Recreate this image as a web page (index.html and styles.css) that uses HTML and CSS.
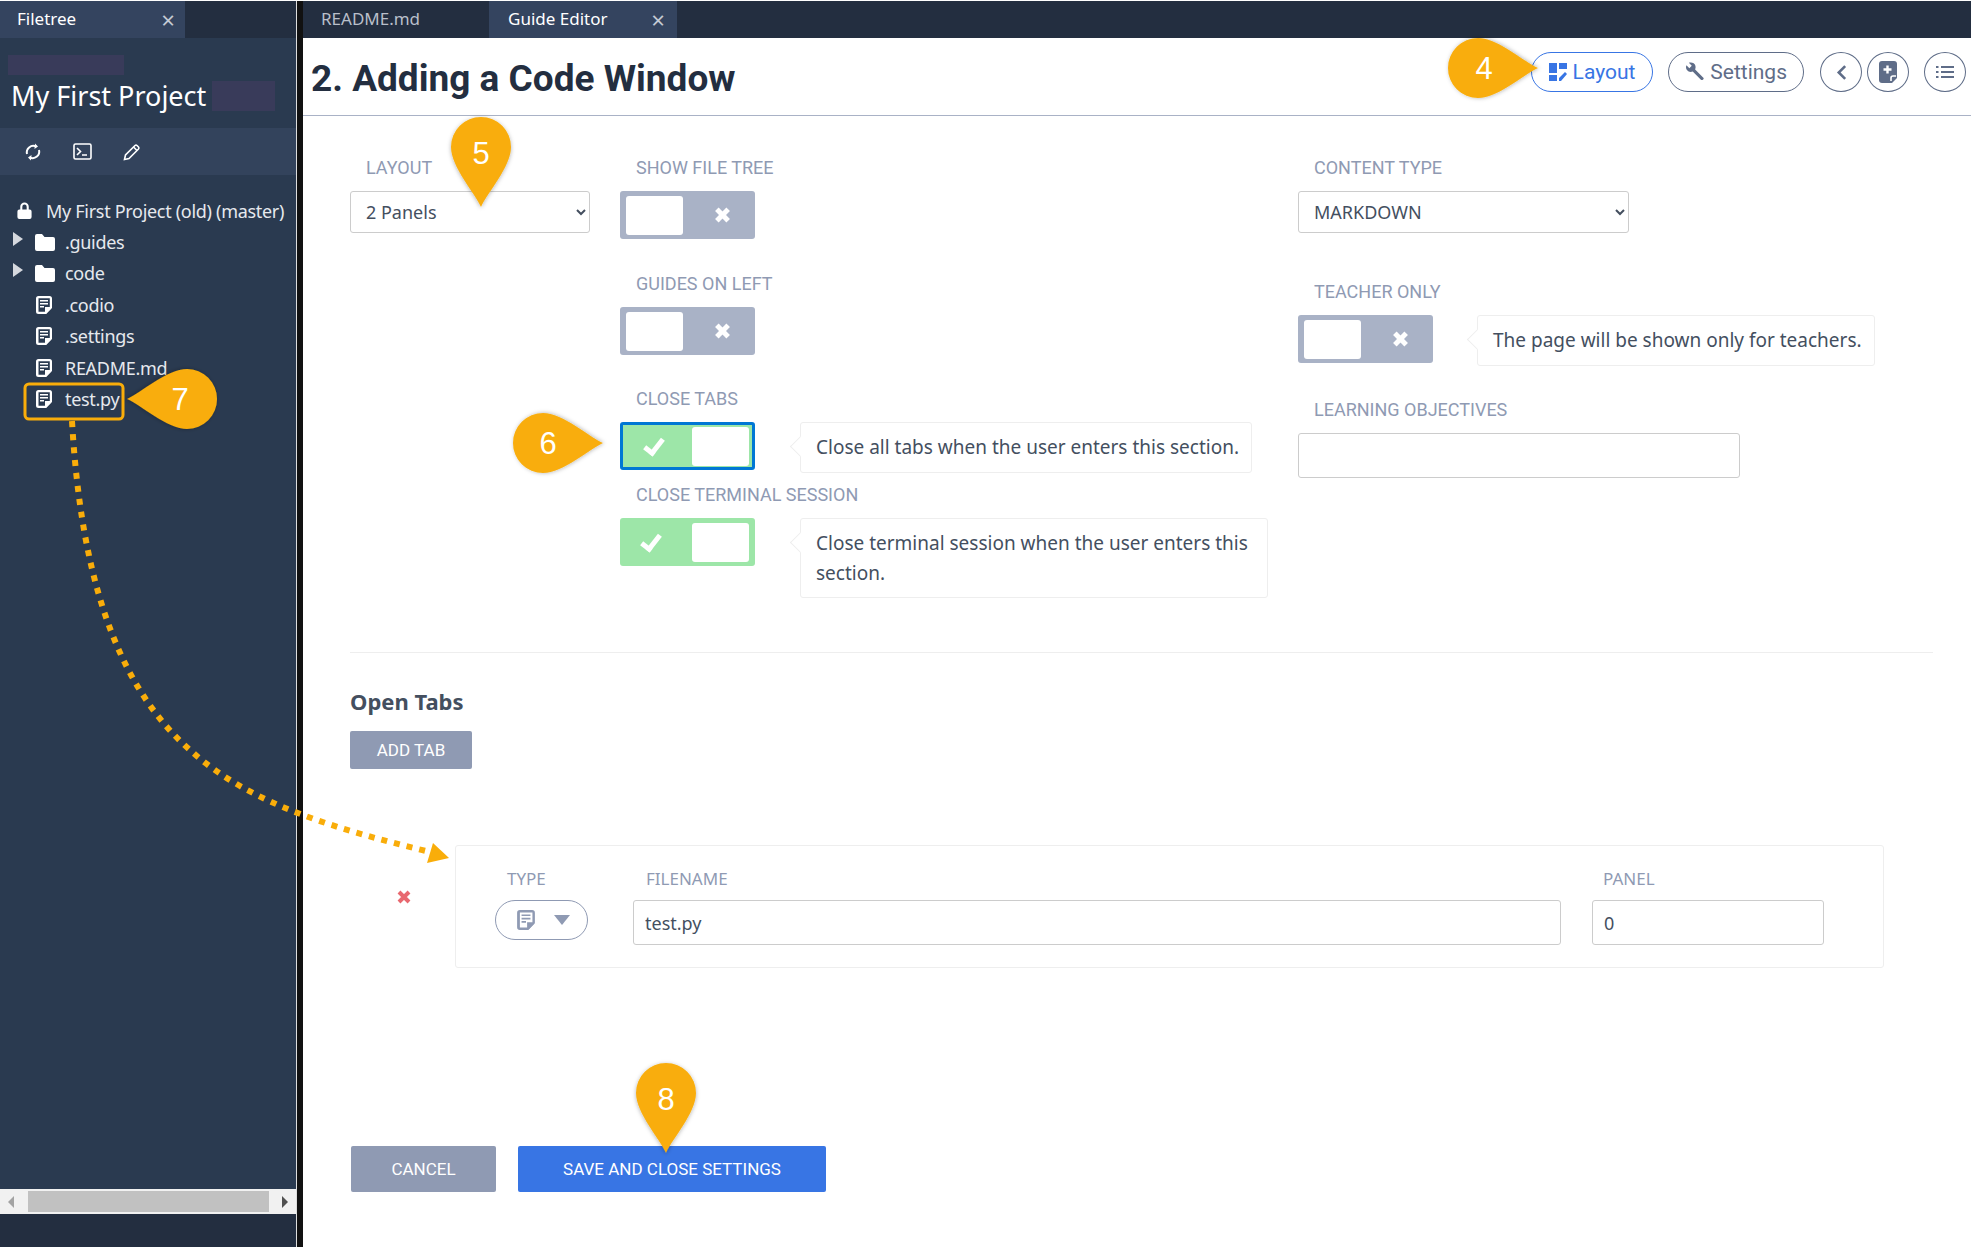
FILE: index.html
```html
<!DOCTYPE html>
<html lang="en">

<head>
    <meta charset="UTF-8">
    <title>Guide Editor</title>
    <link rel="stylesheet" href="styles.css">
</head>

<body>
    <svg class="icon-defs" width="0" height="0">
        <symbol id="i-file" viewBox="0 0 16 18">
            <path fill-rule="evenodd" d="M2.5 0h11A2.5 2.5 0 0 1 16 2.500V12l-6 6H2.500A2.500 2.500 0 0 1 0 15.500v-13A2.500 2.500 0 0 1 2.500 0zM2.500 2.200v13.600H9V11h4.800V2.200z" />
            <path d="M4 4h8v1.500H4zM4 7h8v1.500H4zM4 10h4v1.500H4zM10 12.500h5L10 18z" />
        </symbol>
        <symbol id="i-folder" viewBox="0 0 20 17">
            <path d="M2 0h5l2.500 3H18a2 2 0 0 1 2 2v10a2 2 0 0 1-2 2H2a2 2 0 0 1-2-2V2a2 2 0 0 1 2-2z" />
        </symbol>
    </svg>

    <div class="app">
        <aside class="sidebar">
            <div class="tabbar">
                <div class="tab tab-active tab-filetree">
                    <span>Filetree</span>
                    <span class="tab-close">&times;</span>
                </div>
            </div>
            <div class="project">
                <div class="redact redact-top"></div>
                <div class="project-name">
                    <span>My First Project</span>
                    <div class="redact redact-name"></div>
                </div>
            </div>
            <div class="toolbar">
                <svg class="tool" viewBox="0 0 18 18" width="18" height="18" fill="none" stroke="currentColor" stroke-width="2">
                    <path d="M3 11a6.500 6.500 0 0 1 9-7.500M15 7a6.500 6.500 0 0 1-9 7.500" />
                    <path d="M11 0.500l3 3-3.500 2.500zM7 17.500l-3-3 3.500-2.500z" fill="currentColor" stroke="none" />
                </svg>
                <svg class="tool" viewBox="0 0 19 17" width="19" height="17" fill="none" stroke="currentColor" stroke-width="1.600">
                    <rect x="1" y="1" width="17" height="15" rx="1.500" />
                    <path d="M4 5l3.500 3.500L4 12M9 12h5" />
                </svg>
                <svg class="tool" viewBox="0 0 18 18" width="18" height="18" fill="none" stroke="currentColor" stroke-width="1.600">
                    <path d="M1.500 16.500l1-4.500L12 2.500a1.500 1.500 0 0 1 2 0l1.500 1.500a1.500 1.500 0 0 1 0 2L6 15.500z" />
                    <path d="M10.500 4l3.500 3.500" />
                </svg>
            </div>
            <ul class="tree">
                <li class="tree-row tree-root">
                    <svg viewBox="0 0 15 18" width="15" height="17" fill="currentColor">
                        <path d="M2 8h1V5a4.500 4.500 0 0 1 9 0v3h1a2 2 0 0 1 2 2v6a2 2 0 0 1-2 2H2a2 2 0 0 1-2-2v-6a2 2 0 0 1 2-2zM5.200 8h4.600V5a2.300 2.300 0 0 0-4.600 0z" />
                    </svg>
                    <span>My First Project (old) (master)</span>
                </li>
                <li class="tree-row">
                    <span class="caret"></span>
                    <svg class="tree-folder" width="20" height="17"><use href="#i-folder" /></svg>
                    <span>.guides</span>
                </li>
                <li class="tree-row">
                    <span class="caret"></span>
                    <svg class="tree-folder" width="20" height="17"><use href="#i-folder" /></svg>
                    <span>code</span>
                </li>
                <li class="tree-row tree-file">
                    <svg width="16" height="18"><use href="#i-file" /></svg>
                    <span>.codio</span>
                </li>
                <li class="tree-row tree-file">
                    <svg width="16" height="18"><use href="#i-file" /></svg>
                    <span>.settings</span>
                </li>
                <li class="tree-row tree-file">
                    <svg width="16" height="18"><use href="#i-file" /></svg>
                    <span>README.md</span>
                </li>
                <li class="tree-row tree-file">
                    <svg width="16" height="18"><use href="#i-file" /></svg>
                    <span>test.py</span>
                </li>
            </ul>
            <div class="hscroll">
                <span class="hscroll-left"></span>
                <div class="hscroll-thumb"></div>
                <span class="hscroll-right"></span>
            </div>
            <div class="sidebar-foot"></div>
        </aside>

        <div class="splitter"></div>

        <main class="main">
            <div class="tabbar">
                <div class="tab tab-readme">README.md</div>
                <div class="tab tab-active tab-guide">
                    <span>Guide Editor</span>
                    <span class="tab-close">&times;</span>
                </div>
            </div>

            <header class="page-head">
                <h1>2. Adding a Code Window</h1>
                <div class="head-actions">
                    <button class="pill pill-blue">
                        <svg viewBox="0 0 18 18" width="18" height="18" fill="currentColor">
                            <path d="M0 0h8v10H0zM10 0h8v6h-8zM0 12h8v6H0zM10 18v-3l6-6 2 2-6 7z" />
                        </svg>
                        Layout
                    </button>
                    <button class="pill">
                        <svg viewBox="0 0 20 20" width="20" height="20" fill="currentColor">
                            <path d="M19 16l-8.500-8.500C11.500 5 11 2.500 9 1 7.500 0 5.500-.2 4 .5l3 3-2.500 2.500-3-3C.7 4.500 1 6.500 2 8c1.500 2 4 2.500 6 1.500l8.500 8.500c.5.500 1.500.5 2 0l.5-.5c.500-.5.500-1.200 0-1.500z" />
                        </svg>
                        Settings
                    </button>
                    <button class="round">
                        <svg viewBox="0 0 12 18" width="11" height="17" fill="none" stroke="currentColor" stroke-width="2.800">
                            <path d="M10 2L3 9l7 7" />
                        </svg>
                    </button>
                    <button class="round round-tight">
                        <svg viewBox="0 0 18 22" width="18" height="22">
                            <path fill="#5f6d88" d="M3 0h12a3 3 0 0 1 3 3v14l-5 5H3a3 3 0 0 1-3-3V3a3 3 0 0 1 3-3z" />
                            <path fill="none" stroke="#fff" stroke-width="2.400" d="M8.500 4.500v8M4.500 8.500h8" />
                            <path fill="none" stroke="#fff" stroke-width="1.600" d="M12 20v-3a2 2 0 0 1 2-2h3" />
                        </svg>
                    </button>
                    <button class="round round-list">
                        <svg viewBox="0 0 18 14" width="18" height="14" fill="currentColor">
                            <path d="M0 1h2.500v2H0zM0 6h2.500v2H0zM0 11h2.500v2H0zM5 1h13v2H5zM5 6h13v2H5zM5 11h13v2H5z" />
                        </svg>
                    </button>
                </div>
            </header>

            <form class="settings">
                <div class="settings-grid">
                    <div class="col">
                        <label class="field-label">LAYOUT</label>
                        <select class="control">
                            <option>2 Panels</option>
                        </select>
                    </div>

                    <div class="col">
                        <div class="field field-first">
                            <label class="field-label">SHOW FILE TREE</label>
                            <div class="toggle"><span class="knob"></span><span class="mark-x"></span></div>
                        </div>
                        <div class="field field-second">
                            <label class="field-label">GUIDES ON LEFT</label>
                            <div class="toggle"><span class="knob"></span><span class="mark-x"></span></div>
                        </div>
                        <div class="field field-third">
                            <label class="field-label">CLOSE TABS</label>
                            <div class="with-tip">
                                <div class="toggle toggle-on toggle-focus"><span class="mark-check"></span><span class="knob"></span></div>
                                <div class="tip">Close all tabs when the user enters this section.</div>
                            </div>
                        </div>
                        <div class="field">
                            <label class="field-label">CLOSE TERMINAL SESSION</label>
                            <div class="with-tip">
                                <div class="toggle toggle-on"><span class="mark-check"></span><span class="knob"></span></div>
                                <div class="tip tip-wide">Close terminal session when the user enters this section.</div>
                            </div>
                        </div>
                    </div>

                    <div class="col">
                        <div class="field field-content">
                            <label class="field-label">CONTENT TYPE</label>
                            <select class="control control-type">
                                <option>MARKDOWN</option>
                            </select>
                        </div>
                        <div class="field field-teacher">
                            <label class="field-label">TEACHER ONLY</label>
                            <div class="with-tip with-tip-right">
                                <div class="toggle"><span class="knob"></span><span class="mark-x"></span></div>
                                <div class="tip">The page will be shown only for teachers.</div>
                            </div>
                        </div>
                        <div class="field">
                            <label class="field-label">LEARNING OBJECTIVES</label>
                            <input class="control control-objectives" type="text">
                        </div>
                    </div>
                </div>

                <hr class="rule">

                <h3 class="section-title">Open Tabs</h3>
                <button type="button" class="btn btn-grey btn-add">ADD TAB</button>

                <div class="tab-row">
                    <span class="tab-remove">
                        <svg viewBox="0 0 14 14" width="14" height="14" fill="none" stroke="#e8686f" stroke-width="4">
                            <path d="M2 2l10 10M12 2L2 12" />
                        </svg>
                    </span>
                    <div class="tab-card">
                        <div class="tab-col tab-col-type">
                            <label class="tab-label">TYPE</label>
                            <div class="type-pill">
                                <svg width="18" height="20"><use href="#i-file" /></svg>
                                <span class="type-caret"></span>
                            </div>
                        </div>
                        <div class="tab-col tab-col-file">
                            <label class="tab-label">FILENAME</label>
                            <input class="control tab-input" type="text" value="test.py">
                        </div>
                        <div class="tab-col tab-col-panel">
                            <label class="tab-label">PANEL</label>
                            <input class="control tab-input" type="text" value="0">
                        </div>
                    </div>
                </div>

                <div class="actions">
                    <button type="button" class="btn btn-grey btn-cancel">CANCEL</button>
                    <button type="button" class="btn btn-blue">SAVE AND CLOSE SETTINGS</button>
                </div>
            </form>
        </main>
    </div>

    <!-- callouts drawn over the screen -->
    <svg class="callouts" viewBox="0 0 1971 1247" width="1971" height="1247">
        <defs>
            <filter id="soft" x="-30%" y="-30%" width="160%" height="160%">
                <feDropShadow dx="0" dy="1" stdDeviation="2" flood-color="#000" flood-opacity="0.3" />
            </filter>
            <path id="pin" d="M0 60C-6 46-30 20-30 0A30 30 0 0 1 30 0C30 20 6 46 0 60Z" />
        </defs>

        <rect class="pick" x="25" y="384" width="98" height="35" rx="4" />
        <path class="dots" d="M72 421C80 560 110 680 190 750C250 805 340 830 430 852" />
        <path class="dot-head" d="M449 858L433 843L427 863Z" />

        <use class="pin" href="#pin" transform="translate(1478 68) rotate(-90)" />
        <use class="pin" href="#pin" transform="translate(481 147)" />
        <use class="pin" href="#pin" transform="translate(543 443) rotate(-90)" />
        <use class="pin" href="#pin" transform="translate(187 399) rotate(90)" />
        <use class="pin" href="#pin" transform="translate(666 1093)" />

        <text class="pin-num" x="1484" y="79">4</text>
        <text class="pin-num" x="481" y="164">5</text>
        <text class="pin-num" x="548" y="454">6</text>
        <text class="pin-num" x="180" y="410">7</text>
        <text class="pin-num" x="666" y="1110">8</text>
    </svg>
</body>

</html>
```

FILE: styles.css
```css
* {
    box-sizing: border-box;
}

html,
body {
    margin: 0;
    height: 100%;
    overflow: hidden;
}

body {
    font-family: "Noto Sans", "Open Sans", sans-serif;
    background-color: #fff;
    color: #444f5f;
}

.icon-defs {
    position: absolute;
}

.app {
    display: flex;
    height: 1247px;
    padding-top: 1px;
}

/* sidebar */

.sidebar {
    width: 296px;
    flex: none;
    display: flex;
    flex-direction: column;
    background-color: #2a3a50;
    color: #fff;
}

.splitter {
    width: 7px;
    flex: none;
    background-color: #111;
    border-left: 1px solid #ddd;
}

.tabbar {
    display: flex;
    height: 37px;
    flex: none;
    background-color: #232e40;
}

.tab {
    display: flex;
    align-items: center;
    font-size: 17px;
    color: #fff;
    padding-bottom: 3px;
}

.tab-active {
    background-color: #34445f;
}

.tab-close {
    color: #c5cad3;
    font-size: 24px;
    line-height: 1;
    padding-top: 3px;
}

.tab-filetree {
    width: 185px;
    padding-left: 17px;
    justify-content: space-between;
    padding-right: 10px;
}

.tab-readme {
    width: 186px;
    padding-left: 18px;
    color: #b9bfca;
}

.tab-guide {
    width: 188px;
    padding-left: 19px;
    padding-right: 12px;
    justify-content: space-between;
}

.project {
    height: 90px;
    flex: none;
    padding: 17px 0 0 8px;
}

.redact {
    background-color: #393b5a;
}

.redact-top {
    width: 116px;
    height: 20px;
}

.project-name {
    display: flex;
    align-items: center;
    gap: 6px;
    margin-top: 6px;
    padding-left: 3px;
    font-size: 27px;
    line-height: 30px;
}

.redact-name {
    width: 63px;
    height: 30px;
}

.toolbar {
    height: 47px;
    flex: none;
    display: flex;
    align-items: center;
    gap: 31px;
    padding-left: 24px;
    background-color: #33435c;
    color: #fff;
}

.tree {
    flex: 1;
    list-style: none;
    margin: 0;
    padding: 20px 0 0;
    color: #e6e9ee;
    font-size: 18px;
}

.tree-row {
    display: flex;
    align-items: center;
    height: 31.4px;
    padding-left: 13px;
    letter-spacing: -0.3px;
}

.tree-row svg {
    fill: #fff;
    flex: none;
}

.tree-root {
    padding-left: 17px;
    gap: 14px;
}

.tree-folder {
    margin-left: 12px;
    margin-right: 10px;
}

.tree-file {
    padding-left: 36px;
    gap: 13px;
}

.caret {
    width: 0;
    height: 0;
    margin-top: -6px;
    border-left: 10px solid #d5d8de;
    border-top: 7px solid transparent;
    border-bottom: 7px solid transparent;
}

.hscroll {
    height: 25px;
    flex: none;
    display: flex;
    align-items: center;
    background-color: #f1f1f1;
}

.hscroll-thumb {
    width: 241px;
    height: 21px;
    margin: 0 auto;
    background-color: #c1c1c1;
}

.hscroll-left,
.hscroll-right {
    width: 0;
    height: 0;
    border-top: 6px solid transparent;
    border-bottom: 6px solid transparent;
}

.hscroll-left {
    margin-left: 8px;
    border-right: 6px solid #a3a3a3;
}

.hscroll-right {
    margin-right: 8px;
    border-left: 6px solid #505050;
}

.sidebar-foot {
    height: 33px;
    flex: none;
    background-color: #232e40;
}

/* main */

.main {
    flex: 1;
    min-width: 0;
}

.page-head {
    height: 78px;
    display: flex;
    justify-content: space-between;
    padding: 14px 5px 0 8px;
    border-bottom: 1px solid #a9b2c6;
}

h1 {
    margin: 0;
    font-family: Roboto, sans-serif;
    font-weight: 700;
    font-size: 37px;
    line-height: 54px;
    color: #232e40;
}

.head-actions {
    display: flex;
    gap: 5px;
}

button {
    font-family: inherit;
}

.pill,
.round {
    display: flex;
    align-items: center;
    justify-content: center;
    height: 40px;
    background-color: #fff;
    border: 1px solid #5f6d88;
    color: #5f6d88;
}

.pill {
    gap: 6px;
    border-radius: 20px;
    font-family: Roboto, sans-serif;
    font-size: 21px;
    padding: 0 16px;
    margin-right: 11px;
}

.pill-blue {
    width: 122px;
    margin-right: 10px;
    border-color: #3875e4;
    color: #3875e4;
}

.pill:nth-child(2) {
    width: 136px;
}

.round {
    width: 42px;
    border-radius: 50%;
    padding: 0;
}

.round-list {
    margin-left: 10px;
}

.settings {
    padding: 40px 38px 0 47px;
}

.settings-grid {
    display: grid;
    grid-template-columns: 240px 648px 587px;
    gap: 30px;
    height: 496px;
}

.field-label {
    display: block;
    height: 24px;
    margin-bottom: 11px;
    padding-left: 16px;
    font-family: Roboto, sans-serif;
    font-size: 18px;
    line-height: 24px;
    color: #8f9ab3;
}

.control {
    display: block;
    height: 42px;
    border: 1px solid #ccc;
    border-radius: 3px;
    background-color: #fff;
    font-family: inherit;
    font-size: 18px;
    color: #444f5f;
    padding: 0 11px;
}

select.control {
    width: 240px;
}

select.control-type {
    width: 331px;
}

.control-objectives {
    width: 442px;
    height: 45px;
}

.field-first {
    margin-bottom: 33px;
}

.field-second {
    margin-bottom: 32px;
}

.field-third {
    margin-bottom: 10px;
}

.field-content {
    margin-bottom: 47px;
}

.field-teacher {
    margin-bottom: 32px;
}

.toggle {
    display: flex;
    align-items: center;
    flex: none;
    width: 135px;
    height: 48px;
    padding: 0 6px;
    border-radius: 3px;
    background-color: #a9b2c6;
}

.toggle-on {
    justify-content: space-between;
    background-color: #9de6a8;
}

.toggle-focus {
    border: 3px solid #0077d4;
    padding: 0 3px;
}

.knob {
    display: block;
    width: 57px;
    height: 39px;
    border-radius: 3px;
    background-color: #fff;
}

.mark-x {
    position: relative;
    width: 16px;
    height: 16px;
    margin-left: 31px;
}

.mark-x::before,
.mark-x::after {
    content: "";
    position: absolute;
    left: 6px;
    top: 0;
    width: 5px;
    height: 16px;
    background-color: #fff;
    transform: rotate(45deg);
}

.mark-x::after {
    transform: rotate(-45deg);
}

.mark-check {
    display: block;
    width: 12px;
    height: 20px;
    margin: 0 0 3px 19px;
    border-right: 5px solid #fff;
    border-bottom: 5px solid #fff;
    transform: rotate(38deg);
}

.toggle-focus .mark-check {
    margin-left: 22px;
}

.with-tip {
    display: flex;
    align-items: flex-start;
    gap: 45px;
}

.with-tip-right {
    gap: 44px;
}

.tip {
    position: relative;
    padding: 9px 12px 10px 15px;
    border: 1px solid #eee;
    border-radius: 3px;
    font-size: 19px;
    line-height: 30px;
    white-space: nowrap;
}

.tip-wide {
    width: 468px;
    white-space: normal;
    padding-bottom: 9px;
}

.tip::before {
    content: "";
    position: absolute;
    left: -8px;
    top: 16px;
    width: 14px;
    height: 14px;
    background-color: #fff;
    border-left: 1px solid #eee;
    border-bottom: 1px solid #eee;
    transform: rotate(45deg);
}

.rule {
    margin: 0;
    border: 0;
    border-top: 1px solid #eee;
}

.section-title {
    margin: 33px 0 0;
    font-size: 22px;
    line-height: 30px;
    font-weight: 700;
    color: #444f5f;
}

.btn {
    display: block;
    border: 0;
    border-radius: 2px;
    color: #fff;
    font-family: Roboto, sans-serif;
    font-size: 17px;
}

.btn-grey {
    background-color: #8f9ab3;
}

.btn-blue {
    width: 308px;
    height: 46px;
    background-color: #3875e4;
}

.btn-add {
    width: 122px;
    height: 38px;
    margin-top: 15px;
}

.tab-row {
    display: flex;
    align-items: center;
    margin-top: 76px;
}

.tab-remove {
    display: flex;
    width: 105px;
    padding: 0 0 20px 47px;
}

.tab-card {
    display: flex;
    width: 1429px;
    height: 123px;
    padding: 21px 0 0 39px;
    border: 1px solid #eee;
    border-radius: 3px;
}

.tab-label {
    display: block;
    height: 24px;
    margin-bottom: 9px;
    font-size: 17px;
    line-height: 24px;
    color: #8f9ab3;
}

.tab-col-type {
    width: 138px;
}

.tab-col-type .tab-label {
    padding-left: 12px;
}

.tab-col-file {
    width: 959px;
}

.tab-col-file .tab-label {
    padding-left: 13px;
}

.tab-col-panel .tab-label {
    padding-left: 11px;
}

.tab-input {
    height: 45px;
}

.tab-col-file .tab-input {
    width: 928px;
}

.tab-col-panel .tab-input {
    width: 232px;
}

.type-pill {
    display: flex;
    align-items: center;
    width: 93px;
    height: 40px;
    margin-top: 3px;
    padding-left: 21px;
    gap: 19px;
    border: 1px solid #8f9ab3;
    border-radius: 20px;
    fill: #8f9ab3;
}

.type-caret {
    width: 0;
    height: 0;
    border-top: 10px solid #8f9ab3;
    border-left: 8px solid transparent;
    border-right: 8px solid transparent;
}

.actions {
    display: flex;
    gap: 22px;
    margin-top: 178px;
    padding-left: 1px;
}

.btn-cancel {
    width: 145px;
    height: 46px;
}

/* callouts */

.callouts {
    position: absolute;
    left: 0;
    top: 0;
    pointer-events: none;
}

.pin {
    fill: #f9ad0a;
    filter: url(#soft);
}

.pick {
    fill: none;
    stroke: #f9ad0a;
    stroke-width: 3;
}

.dots {
    fill: none;
    stroke: #f9ad0a;
    stroke-width: 6;
    stroke-dasharray: 6 7;
}

.dot-head {
    fill: #f9ad0a;
}

.pin-num {
    font-family: "Liberation Sans", Arial, sans-serif;
    font-size: 31px;
    fill: #fff;
    text-anchor: middle;
}
```
